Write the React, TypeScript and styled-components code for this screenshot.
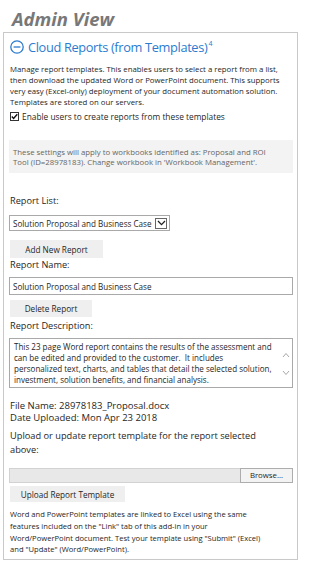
import styled, { createGlobalStyle } from "styled-components";

const GlobalStyle = createGlobalStyle`
  html, body {
    margin: 0;
    padding: 0;
    background: #ffffff;
  }
  body {
    font-family: "Open Sans", "Noto Sans", sans-serif;
    color: #262626;
  }
`;

function CollapseIcon() {
  return (
    <IconSvg width="14" height="14" viewBox="0 0 14 14">
      <circle cx="7" cy="7" r="6.2" fill="none" stroke="#2b7bd0" strokeWidth="1.3" />
      <line x1="3.6" y1="7" x2="10.4" y2="7" stroke="#2b7bd0" strokeWidth="1.3" />
    </IconSvg>
  );
}

function CheckMark() {
  return (
    <CheckBox viewBox="0 0 9 9" width="9" height="9">
      <rect x="0.5" y="0.5" width="8" height="8" fill="#fff" stroke="#333" strokeWidth="1" />
      <path d="M1.8 4.6 L3.6 6.5 L7.3 2.2" fill="none" stroke="#111" strokeWidth="1.4" />
    </CheckBox>
  );
}

function App() {
  return (
    <>
      <GlobalStyle />
      <PageTitle>Admin View</PageTitle>
      <Panel>
        <SectionHeader>
          <CollapseIcon />
          <SectionTitle>
            Cloud Reports (from Templates)<Sup>4</Sup>
          </SectionTitle>
        </SectionHeader>

        <Paragraph $size={7.8} $line={11} $top={3.5}>
          Manage report templates. This enables users to select a report from a list,
          <br />
          then download the updated Word or PowerPoint document. This supports
          <br />
          very easy (Excel-only) deployment of your document automation solution.
          <br />
          Templates are stored on our servers.
        </Paragraph>

        <CheckRow>
          <CheckMark />
          <span>Enable users to create reports from these templates</span>
        </CheckRow>

        <Note>
          These settings will apply to workbooks identified as: Proposal and ROI
          <br />
          Tool (ID=28978183). Change workbook in 'Workbook Management'.
        </Note>

        <FieldLabel $top={21}>Report List:</FieldLabel>
        <SelectBox>
          <span>Solution Proposal and Business Case</span>
          <SelectArrow>
            <svg width="9" height="6" viewBox="0 0 9 6">
              <path d="M1 1 L4.5 4.6 L8 1" fill="none" stroke="#222" strokeWidth="1.3" />
            </svg>
          </SelectArrow>
        </SelectBox>
        <GrayButton $width={93} $height={18} $top={9}>
          Add New Report
        </GrayButton>

        <FieldLabel $top={0}>Report Name:</FieldLabel>
        <TextInput>Solution Proposal and Business Case</TextInput>
        <GrayButton $width={82} $height={17} $top={5}>
          Delete Report
        </GrayButton>

        <FieldLabel $top={2}>Report Description:</FieldLabel>
        <TextArea>
          <Paragraph $size={8.05} $line={11} $top={0}>
            This 23 page Word report contains the results of the assessment and
            <br />
            can be edited and provided to the customer.&nbsp; It includes
            <br />
            personalized text, charts, and tables that detail the selected solution,
            <br />
            investment, solution benefits, and financial analysis.
          </Paragraph>
          <ScrollArrows>
            <svg width="8" height="26" viewBox="0 0 8 26">
              <path d="M1 6 L4 2.5 L7 6" fill="none" stroke="#a8a8a8" strokeWidth="1" />
              <path d="M1 20 L4 23.5 L7 20" fill="none" stroke="#a8a8a8" strokeWidth="1" />
            </svg>
          </ScrollArrows>
        </TextArea>

        <Paragraph $size={9.5} $line={12.3} $top={12.3}>
          File Name: 28978183_Proposal.docx
          <br />
          Date Uploaded: Mon Apr 23 2018
        </Paragraph>

        <Paragraph $size={9.25} $line={14.3} $top={4}>
          Upload or update report template for the report selected
          <br />
          above:
        </Paragraph>

        <FileRow>
          <FileField />
          <BrowseButton>Browse...</BrowseButton>
        </FileRow>
        <GrayButton $width={115} $height={16} $top={3.5}>
          Upload Report Template
        </GrayButton>

        <Paragraph $size={7.6} $line={11.7} $top={7.2}>
          Word and PowerPoint templates are linked to Excel using the same
          <br />
          features included on the "Link" tab of this add-in in your
          <br />
          Word/PowerPoint document. Test your template using "Submit" (Excel)
          <br />
          and "Update" (Word/PowerPoint).
        </Paragraph>
      </Panel>
    </>
  );
}

export default App;

const PageTitle = styled.div`
  box-sizing: border-box;
  height: 32px;
  padding: 10px 0 0 12px;
  font-size: 18.5px;
  line-height: 18px;
  font-weight: 700;
  font-style: italic;
  color: #787878;
`;

const Panel = styled.div`
  box-sizing: border-box;
  width: 295px;
  margin-left: 3px;
  padding: 0 4px 3px 5px;
  border: 1px solid #c9c9c9;
  display: flex;
  flex-direction: column;
  align-items: flex-start;
`;

const SectionHeader = styled.div`
  height: 27px;
  display: flex;
  align-items: center;
  gap: 4px;
  padding-left: 1px;
`;

const IconSvg = styled.svg`
  flex: none;
`;

const SectionTitle = styled.div`
  font-size: 12.8px;
  letter-spacing: -0.35px;
  color: #2b7bd0;
  white-space: nowrap;
`;

const Sup = styled.sup`
  font-size: 7px;
  line-height: 0;
  vertical-align: 6px;
  margin-left: 1px;
  letter-spacing: 0;
`;

const Paragraph = styled.div<{ $size: number; $line: number; $top: number }>`
  margin-top: ${(p) => p.$top}px;
  padding-left: 1px;
  font-size: ${(p) => p.$size}px;
  line-height: ${(p) => p.$line}px;
  white-space: nowrap;
  color: #262626;
`;

const CheckRow = styled.div`
  margin-top: 0.5px;
  height: 16px;
  display: flex;
  align-items: center;
  gap: 3px;
  padding-left: 1px;
  font-size: 8.35px;
  white-space: nowrap;
`;

const CheckBox = styled.svg`
  flex: none;
`;

const Note = styled.div`
  box-sizing: border-box;
  align-self: stretch;
  margin-top: 16px;
  height: 33px;
  padding: 6.5px 0 0 4px;
  background: #f3f3f3;
  color: #666666;
  font-size: 7.8px;
  line-height: 10.7px;
  white-space: nowrap;
`;

const FieldLabel = styled.div<{ $top: number }>`
  margin-top: ${(p) => p.$top}px;
  height: 14px;
  line-height: 14px;
  padding-left: 1px;
  font-size: 9.2px;
  color: #262626;
`;

const SelectBox = styled.div`
  box-sizing: border-box;
  margin-top: 7px;
  width: 161px;
  height: 16px;
  padding: 0 2px 0 3px;
  border: 1px solid #a9a9a9;
  display: flex;
  align-items: center;
  justify-content: space-between;
  font-size: 8.1px;
  white-space: nowrap;
`;

const SelectArrow = styled.div`
  box-sizing: border-box;
  width: 12px;
  height: 11px;
  border: 1px solid #666666;
  display: flex;
  align-items: center;
  justify-content: center;
`;

const GrayButton = styled.div<{ $width: number; $height: number; $top: number }>`
  margin-top: ${(p) => p.$top}px;
  margin-left: 1px;
  width: ${(p) => p.$width}px;
  height: ${(p) => p.$height}px;
  background: #efefef;
  display: flex;
  align-items: center;
  justify-content: center;
  font-size: 8.2px;
  color: #262626;
  white-space: nowrap;
`;

const TextInput = styled.div`
  box-sizing: border-box;
  align-self: stretch;
  margin-top: 5px;
  height: 18px;
  padding-left: 3px;
  border: 1px solid #a9a9a9;
  display: flex;
  align-items: center;
  font-size: 8.1px;
  white-space: nowrap;
`;

const TextArea = styled.div`
  box-sizing: border-box;
  align-self: stretch;
  margin-top: 4.7px;
  height: 50px;
  padding: 2px 0 0 3px;
  border: 1px solid #a9a9a9;
  display: flex;
  justify-content: space-between;
`;

const ScrollArrows = styled.div`
  padding: 10px 2px 0 0;
`;

const FileRow = styled.div`
  align-self: stretch;
  margin-top: 10.5px;
  height: 15px;
  display: flex;
`;

const FileField = styled.div`
  flex: 1;
  background: #e8e8e8;
  border: 1px solid #d2d2d2;
  border-right: none;
`;

const BrowseButton = styled.div`
  box-sizing: border-box;
  width: 53px;
  background: #f3f3f3;
  border: 1px solid #adadad;
  display: flex;
  align-items: center;
  justify-content: center;
  font-size: 7.8px;
  color: #262626;
`;
